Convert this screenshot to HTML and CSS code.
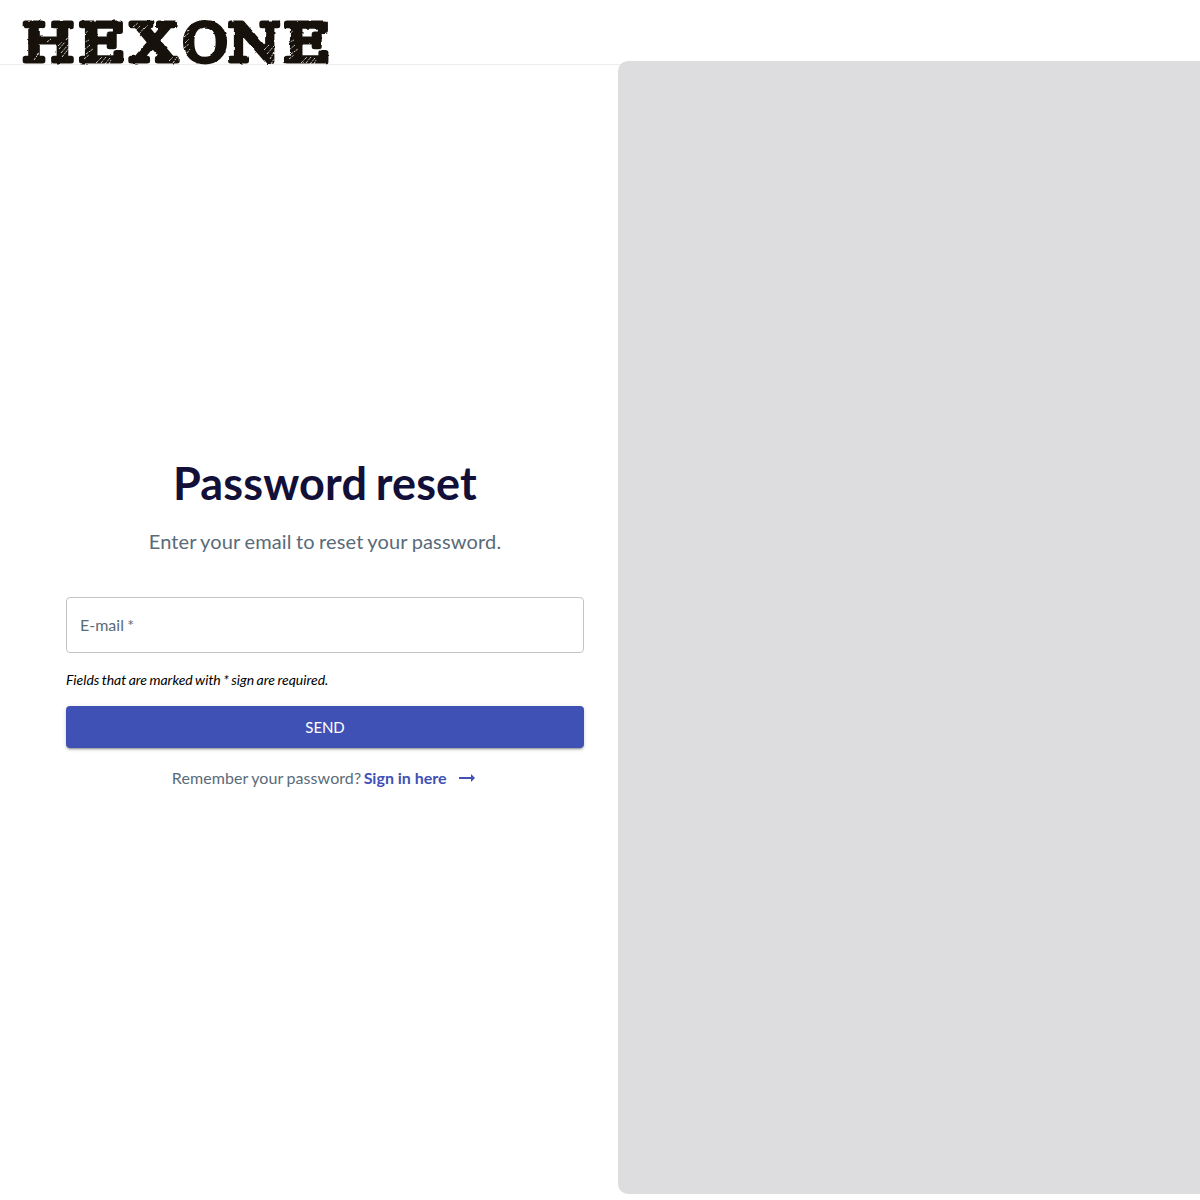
FILE: index.html
```html
<!DOCTYPE html>
<html lang="en">
<head>
<meta charset="utf-8">
<title>Password reset</title>
<link rel="stylesheet" href="styles.css">
</head>
<body>
<header class="header">
  <svg class="logo" width="310" height="46" viewBox="22 20 310 46" role="img" aria-label="HEXONE">
    <defs>
      <filter id="rough" x="-5%" y="-10%" width="110%" height="120%" color-interpolation-filters="sRGB">
        <feTurbulence type="fractalNoise" baseFrequency="0.16" numOctaves="2" seed="4" result="n"/>
        <feDisplacementMap in="SourceGraphic" in2="n" scale="2.5" xChannelSelector="R" yChannelSelector="G"/>
      </filter>
    </defs>
    <g class="logo-text" filter="url(#rough)">
      <text x="22.2" y="61.2" textLength="52" lengthAdjust="spacingAndGlyphs">H</text>
      <text x="78.5" y="61.2" textLength="47" lengthAdjust="spacingAndGlyphs">E</text>
      <text x="131" y="61.2" textLength="46" lengthAdjust="spacingAndGlyphs">X</text>
      <text x="182.5" y="61.2" textLength="45" lengthAdjust="spacingAndGlyphs">O</text>
      <text x="228" y="61.2" textLength="52" lengthAdjust="spacingAndGlyphs">N</text>
      <text x="283.5" y="61.2" textLength="47" lengthAdjust="spacingAndGlyphs">E</text>
    </g>
    <g class="scratches">
      <path d="M34 60l5-7M37 55l2-3M47 42l4-3M59 49l6-7M61 53l8-9M62 57l7-9M66 40l3-4M58 46l4-4"/>
      <path d="M83 35l5-4M83 43l6-3M84 50l6-5M86 54l7-5M84 59l5-4M96 63l6-6M101 63l5-6M105 64l5-6M109 64l2-4"/>
      <path d="M133 27l5-4M135 31l5-5M139 34l5-6M144 29l4-4M169 61l4-4M173 63l4-6"/>
      <path d="M184 37l5-4M185 43l4-4M184 48l5-4M187 53l3-4M187 31l3-1"/>
      <path d="M264 50l5-5M267 54l7-8M270 59l4-7M271 64l3-5"/>
      <path transform="translate(205 0)" d="M83 35l5-4M83 43l6-3M84 50l6-5M86 54l7-5M84 59l5-4M96 63l6-6M101 63l5-6M105 64l5-6M109 64l2-4"/>
    </g>
  </svg>
</header>
<main class="page">
  <section class="form-side">
    <h1 class="title">Password reset</h1>
    <p class="subtitle">Enter your email to reset your password.</p>
    <form class="form">
      <div class="field">E-mail&nbsp;*</div>
      <p class="hint">Fields that are marked with * sign are required.</p>
      <button class="send" type="button">SEND</button>
    </form>
    <p class="signin"><span class="question">Remember your password?</span><a class="link" href="#">Sign in here</a>
      <svg class="arrow" width="16" height="10" viewBox="0 0 16 10"><path d="M0 4h12V1l4 4-4 4V6H0z"/></svg>
    </p>
  </section>
  <aside class="cover"></aside>
</main>
</body>
</html>
```
FILE: styles.css
```css
* { box-sizing: border-box; }
body {
  margin: 0;
  height: 1200px;
  overflow: hidden;
  background: #fff;
  font-family: Lato, sans-serif;
  color: #596b79;
}
.header {
  height: 65px;
  padding: 20px 22px 0;
  border-bottom: 1px solid #ececec;
}
.logo { display: block; overflow: visible; }
.logo-text {
  font: 52px "DejaVu Serif", serif;
  fill: #17110b;
  stroke: #17110b;
  stroke-width: 5px;
  stroke-linejoin: round;
}
.scratches { fill: none; stroke: #fff; stroke-width: .8px; stroke-dasharray: 2.5 1 1.5 .7; }
.page { display: flex; height: 1135px; }
.form-side { width: 618px; padding: 388px 34px 0 66px; }
.title {
  margin: 0;
  color: #120f38;
  font-size: 45px;
  line-height: 60px;
  letter-spacing: .15px;
  word-spacing: -2.5px;
  text-align: center;
}
.subtitle {
  margin: 13px 0 0;
  font-size: 20px;
  line-height: 30px;
  letter-spacing: .16px;
  word-spacing: -1px;
  text-align: center;
}
.form { margin-top: 41px; }
.field {
  height: 56px;
  padding: 0 13px;
  border: 1px solid #c4c4c4;
  border-radius: 4px;
  font-size: 16px;
  line-height: 54px;
  word-spacing: -.7px;
}
.hint {
  margin: 17px 0;
  color: #000;
  font-size: 14px;
  font-style: italic;
  line-height: 19px;
  word-spacing: -.85px;
}
.send {
  display: block;
  width: 100%;
  height: 42px;
  padding: 0;
  border: 0;
  border-radius: 4px;
  background: #3f51b5;
  color: #fff;
  font: 15px/42px Lato, sans-serif;
  letter-spacing: -.1px;
  box-shadow: 0 3px 1px -2px rgba(0,0,0,.2), 0 2px 2px rgba(0,0,0,.14), 0 1px 5px rgba(0,0,0,.12);
}
.signin {
  display: flex;
  justify-content: center;
  align-items: center;
  margin: 18px 0 0;
  font-size: 16px;
  line-height: 24px;
}
.question { margin-right: 2.5px; letter-spacing: .07px; word-spacing: -.6px; }
.link { color: #3f51b5; font-weight: 700; text-decoration: none; }
.arrow { margin: 0 3px 0 12.5px; fill: #3f51b5; }
.cover {
  flex: 1;
  height: 1133px;
  margin-top: -4px;
  border-radius: 10px 0 0 10px;
  background: #dddddf;
}
```
